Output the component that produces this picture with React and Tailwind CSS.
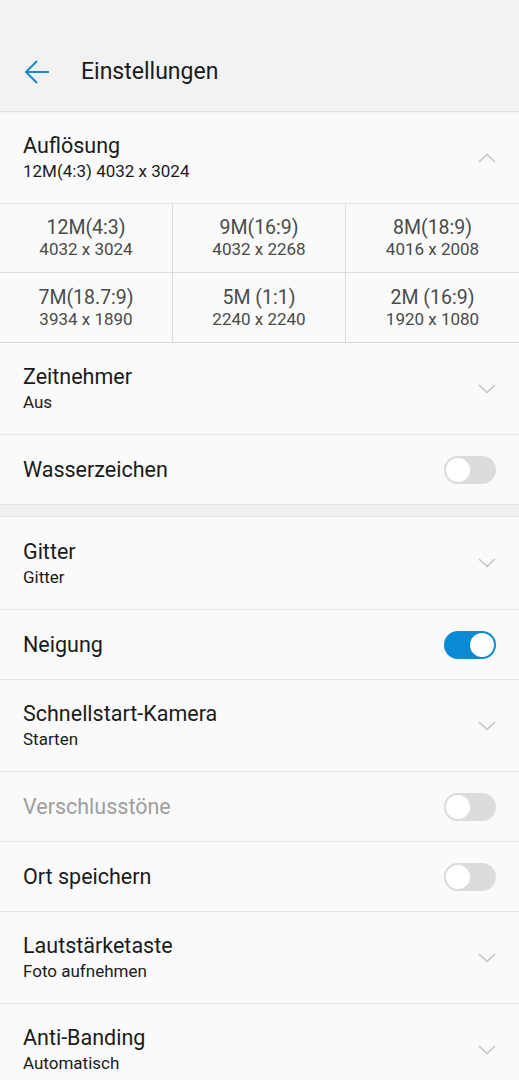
import React from "react";

const Chevron = ({ up }) => (
  <svg width="18" height="10" viewBox="0 0 18 10" className="text-[#c4c4c4]">
    <path
      d={up ? "M1 9 L9 1.5 L17 9" : "M1 1 L9 8.5 L17 1"}
      fill="none"
      stroke="currentColor"
      strokeWidth="1.6"
    />
  </svg>
);

const Toggle = ({ on }) =>
  on ? (
    <div className="w-[52px] h-[28px] rounded-full bg-[#0a8ad2] flex items-center justify-end px-[2px]">
      <div className="w-[24px] h-[24px] rounded-full bg-white" />
    </div>
  ) : (
    <div className="w-[52px] h-[28px] rounded-full bg-[#dcdcdc] flex items-center">
      <div className="w-[28px] h-[28px] rounded-full bg-white border-[2px] border-[#dcdcdc]" />
    </div>
  );

const Row = ({ title, sub, right, muted, tall }) => (
  <div
    className={`flex items-center justify-between pl-[23px] pr-[23px] border-b border-[#e6e6e6] ${
      sub ? (tall ? "h-[93px]" : "h-[92px]") : "h-[70px]"
    }`}
  >
    <div className="flex flex-col">
      <span className={`text-[21.5px] leading-[27px] ${muted ? "text-[#9e9e9e]" : "text-[#1a1a1a]"}`}>
        {title}
      </span>
      {sub && <span className="text-[17px] leading-[24px] text-[#1a1a1a]">{sub}</span>}
    </div>
    {right}
  </div>
);

const sizes = [
  ["12M(4:3)", "4032 x 3024"],
  ["9M(16:9)", "4032 x 2268"],
  ["8M(18:9)", "4016 x 2008"],
  ["7M(18.7:9)", "3934 x 1890"],
  ["5M (1:1)", "2240 x 2240"],
  ["2M (16:9)", "1920 x 1080"],
];

export default function App() {
  return (
    <div className="w-[519px] h-[1080px] overflow-hidden bg-[#fafafa] font-['Roboto',sans-serif]">
      <div className="h-[112px] bg-[#f2f2f2] border-b border-[#e0e0e0] flex items-end pb-[25px] pl-[24px] shadow-[0_1px_2px_rgba(0,0,0,0.04)]">
        <svg width="26" height="26" viewBox="0 0 26 26" className="text-[#1a8ad0] mb-[1px]">
          <path
            d="M2 13 H25 M13 2 L2 13 L13 24"
            fill="none"
            stroke="currentColor"
            strokeWidth="2"
          />
        </svg>
        <span className="ml-[31px] text-[23px] leading-[28px] text-[#1a1a1a]">Einstellungen</span>
      </div>

      <Row title="Auflösung" sub="12M(4:3) 4032 x 3024" right={<Chevron up />} />

      <div className="grid grid-cols-3 border-b border-[#dcdcdc]">
        {sizes.map(([a, b], i) => (
          <div
            key={a}
            className={`h-[69px] flex flex-col items-center justify-center text-[#4a4a4a] ${
              i % 3 !== 2 ? "border-r border-[#dcdcdc]" : ""
            } ${i < 3 ? "border-b border-[#dcdcdc]" : ""}`}
          >
            <span className="text-[19.5px] leading-[23px]">{a}</span>
            <span className="text-[17px] leading-[21px]">{b}</span>
          </div>
        ))}
      </div>

      <Row title="Zeitnehmer" sub="Aus" right={<Chevron />} />
      <Row title="Wasserzeichen" right={<Toggle />} />

      <div className="h-[12px] bg-[#f0f0f0] border-b border-[#e6e6e6]" />

      <Row title="Gitter" sub="Gitter" tall right={<Chevron />} />
      <Row title="Neigung" right={<Toggle on />} />
      <Row title="Schnellstart-Kamera" sub="Starten" right={<Chevron />} />
      <Row title="Verschlusstöne" muted right={<Toggle />} />
      <Row title="Ort speichern" right={<Toggle />} />
      <Row title="Lautstärketaste" sub="Foto aufnehmen" right={<Chevron />} />
      <Row title="Anti-Banding" sub="Automatisch" right={<Chevron />} />
    </div>
  );
}
